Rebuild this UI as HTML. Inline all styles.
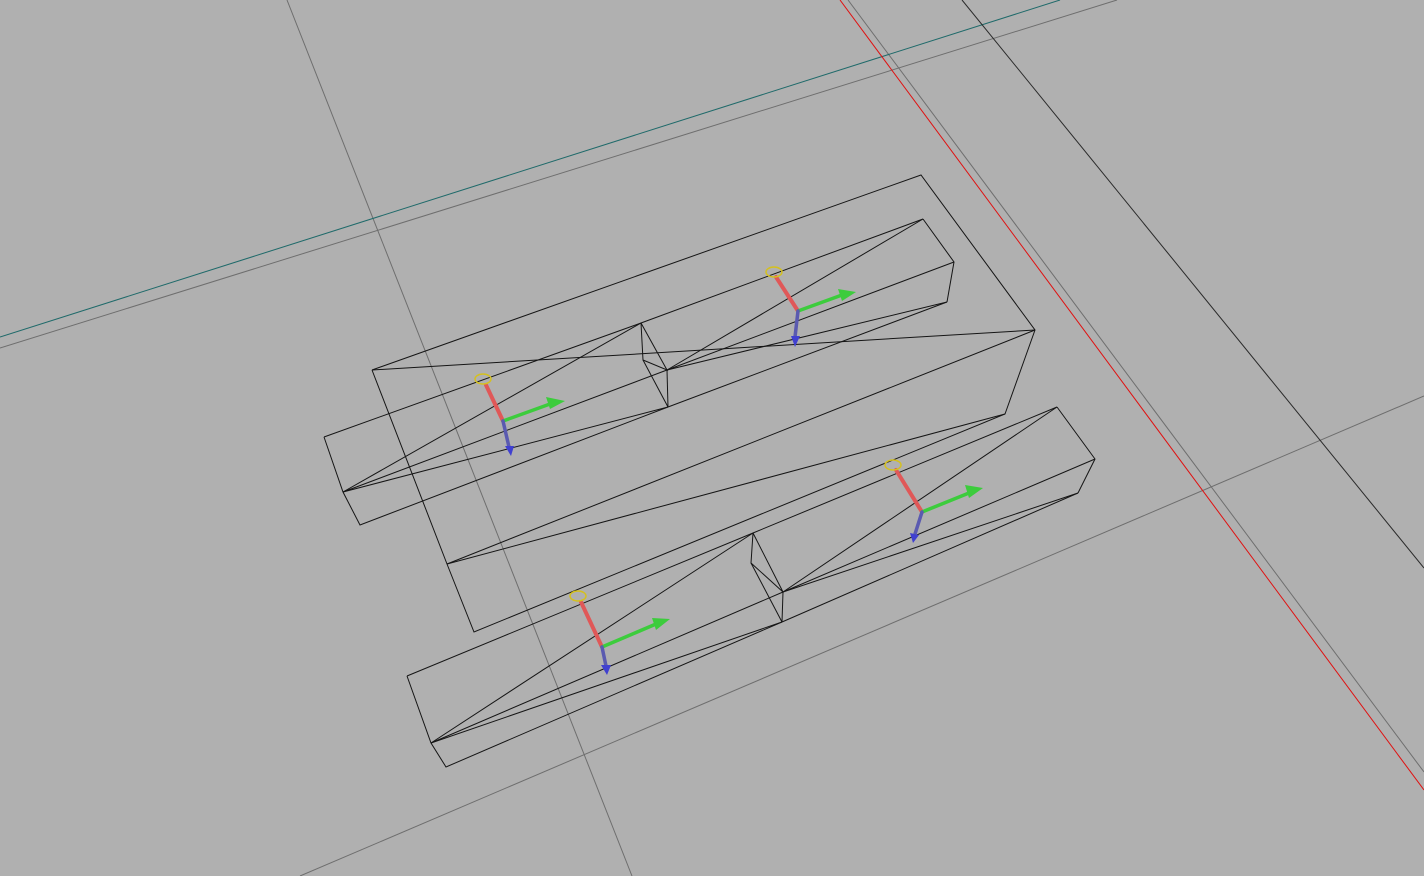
<!DOCTYPE html>
<html><head><style>html,body{margin:0;padding:0;background:#b0b0b0;overflow:hidden}svg{display:block}</style></head>
<body>
<svg width="1424" height="876" viewBox="0 0 1424 876" xmlns="http://www.w3.org/2000/svg">
<rect width="1424" height="876" fill="#b0b0b0"/>
<g stroke="#6e6e6e" stroke-width="1" fill="none">
<line x1="287" y1="0" x2="632" y2="876"/>
<line x1="0" y1="348" x2="1117" y2="0"/>
<line x1="848" y1="0" x2="1424" y2="772"/>
<line x1="300" y1="876" x2="1424" y2="396"/>
</g>
<line x1="0" y1="337" x2="1060" y2="0" stroke="#1f6a6a" stroke-width="1"/>
<line x1="962" y1="0" x2="1424" y2="568" stroke="#2a2a2a" stroke-width="1"/>
<line x1="840" y1="0" x2="1424" y2="790" stroke="#e01010" stroke-width="1"/>
<g stroke="#151515" stroke-width="1" fill="none">
<!-- large box -->
<polyline points="372,370 921,175 1035,330 1005,414 474,632 447,564 372,370"/>
<line x1="372" y1="370" x2="1035" y2="330"/>
<line x1="447" y1="564" x2="1035" y2="330"/>
<line x1="447" y1="564" x2="1005" y2="414"/>
<!-- box1 -->
<polyline points="324,437 343,492 360,525 668,407"/>
<line x1="324" y1="437" x2="641" y2="323"/>
<line x1="343" y1="492" x2="667" y2="370"/>
<line x1="343" y1="492" x2="641" y2="323"/>
<line x1="343" y1="492" x2="668" y2="407"/>
<polyline points="641,323 643,360 667,370 641,323"/>
<line x1="667" y1="370" x2="668" y2="407"/>
<line x1="643" y1="360" x2="668" y2="407"/>
<!-- box2 -->
<line x1="641" y1="323" x2="923" y2="219"/>
<line x1="667" y1="370" x2="954" y2="262"/>
<line x1="668" y1="407" x2="947" y2="302"/>
<polyline points="923,219 954,262 947,302"/>
<line x1="667" y1="370" x2="923" y2="219"/>
<line x1="667" y1="370" x2="947" y2="302"/>
<!-- box3 -->
<polyline points="407,676 431,743 446,767 782,622"/>
<line x1="407" y1="676" x2="753" y2="533"/>
<line x1="431" y1="743" x2="783" y2="592"/>
<line x1="431" y1="743" x2="753" y2="533"/>
<line x1="431" y1="743" x2="782" y2="622"/>
<polyline points="753,533 751,563 783,592 753,533"/>
<line x1="783" y1="592" x2="782" y2="622"/>
<line x1="751" y1="563" x2="782" y2="622"/>
<!-- box4 -->
<line x1="753" y1="533" x2="1057" y2="407"/>
<line x1="783" y1="592" x2="1095" y2="459"/>
<line x1="782" y1="622" x2="1078" y2="493"/>
<polyline points="1057,407 1095,459 1078,493"/>
<line x1="783" y1="592" x2="1057" y2="407"/>
<line x1="783" y1="592" x2="1078" y2="493"/>
</g>
<!-- gizmos -->
<g id="g">
</g>
<g stroke-linecap="round">
<!-- G1 -->
<line x1="486" y1="385" x2="503" y2="421" stroke="#e05858" stroke-width="4"/>
<line x1="503" y1="421" x2="550" y2="404" stroke="#3ccc3c" stroke-width="3.5"/>
<polygon points="565,401 546,397 550,409" fill="#3ccc3c"/>
<line x1="503" y1="421" x2="509" y2="447" stroke="#5a5ab0" stroke-width="3.5"/>
<polygon points="505,446 514,446 511,456" fill="#4040d0"/>
<ellipse cx="483" cy="379" rx="8" ry="5" fill="none" stroke="#d4c020" stroke-width="1.5"/>
<!-- G2 -->
<line x1="776" y1="277" x2="798" y2="311" stroke="#e05858" stroke-width="4"/>
<line x1="798" y1="311" x2="842" y2="295" stroke="#3ccc3c" stroke-width="3.5"/>
<polygon points="856,292 838,289 842,301" fill="#3ccc3c"/>
<line x1="798" y1="311" x2="795" y2="337" stroke="#5a5ab0" stroke-width="3.5"/>
<polygon points="791,336 800,336 795,347" fill="#4040d0"/>
<ellipse cx="774" cy="272" rx="8" ry="5" fill="none" stroke="#d4c020" stroke-width="1.5"/>
<!-- G3 -->
<line x1="896" y1="470" x2="922" y2="512" stroke="#e05858" stroke-width="4"/>
<line x1="922" y1="512" x2="969" y2="493" stroke="#3ccc3c" stroke-width="3.5"/>
<polygon points="983,488 965,485 969,498" fill="#3ccc3c"/>
<line x1="922" y1="512" x2="915" y2="534" stroke="#5a5ab0" stroke-width="3.5"/>
<polygon points="910,533 919,535 913,543" fill="#4040d0"/>
<ellipse cx="893" cy="465" rx="8" ry="5" fill="none" stroke="#d4c020" stroke-width="1.5"/>
<!-- G4 -->
<line x1="581" y1="602" x2="602" y2="647" stroke="#e05858" stroke-width="4"/>
<line x1="602" y1="647" x2="656" y2="624" stroke="#3ccc3c" stroke-width="3.5"/>
<polygon points="670,619 652,618 656,630" fill="#3ccc3c"/>
<line x1="602" y1="647" x2="606" y2="666" stroke="#5a5ab0" stroke-width="3.5"/>
<polygon points="601,665 611,665 607,675" fill="#4040d0"/>
<ellipse cx="578" cy="596" rx="8" ry="5" fill="none" stroke="#d4c020" stroke-width="1.5"/>
</g>
</svg>
</body></html>
